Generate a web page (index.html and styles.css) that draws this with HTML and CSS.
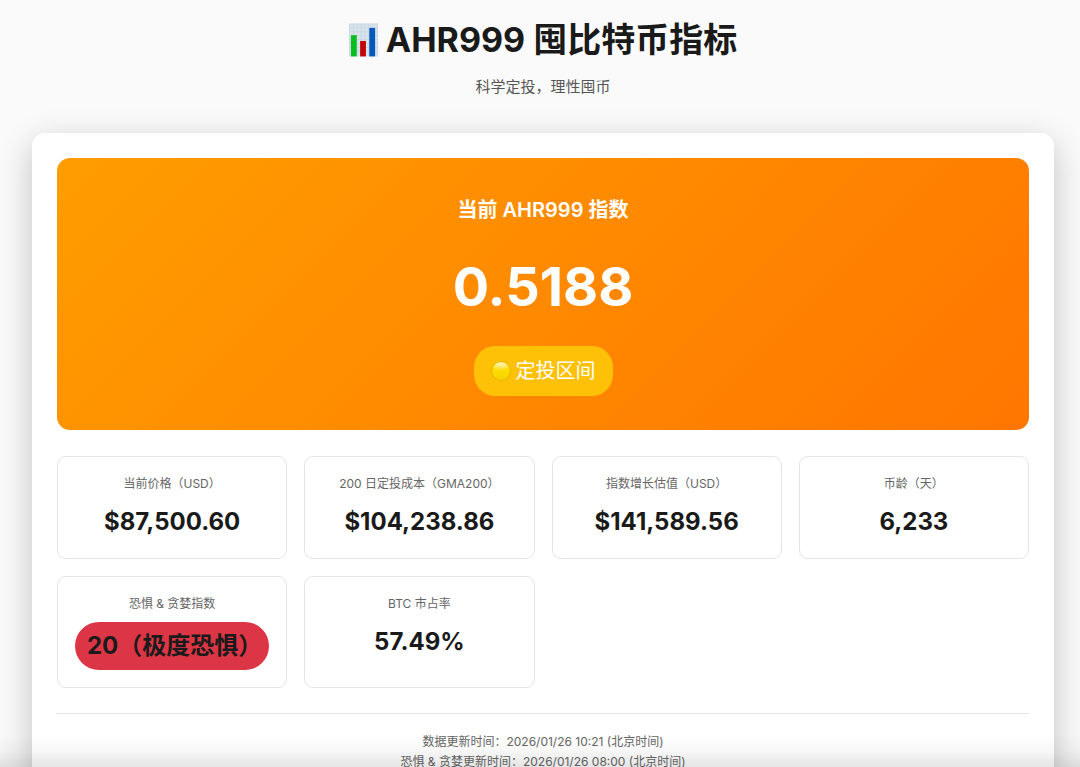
FILE: index.html
```html
<!DOCTYPE html>
<html lang="zh-CN">
<head>
  <meta charset="UTF-8">
  <meta name="viewport" content="width=device-width, initial-scale=1.0">
  <title>AHR999 囤比特币指标</title>
  <link rel="stylesheet" href="styles.css">
</head>
<body>
  <header class="header">
    <h1>
      <svg class="chart-icon" viewBox="0 0 30 34" aria-hidden="true">
        <rect width="30" height="34" fill="#d9e5ee"/>
        <path d="M0 .5H30M0 4.5H30M0 8.5H30M0 12.5H30M0 16.5H30M0 20.5H30M0 24.5H30M0 28.5H30M.5 0V34M4.5 0V34M8.5 0V34M12.5 0V34M16.5 0V34M20.5 0V34M24.5 0V34M29.5 0V34" stroke="#bccbd6" stroke-width="1" opacity=".5"/>
        <rect x="2" y="12" width="6" height="22" fill="#08bd20"/>
        <rect x="11.500" y="18" width="6" height="16" fill="#c00508"/>
        <rect x="21" y="4.500" width="6" height="29.500" fill="#0758bd"/>
      </svg>
      <span>AHR999 囤比特币指标</span>
    </h1>
    <p class="subtitle">科学定投，理性囤币</p>
  </header>

  <main class="card">
    <section class="index-box">
      <h2>当前 AHR999 指数</h2>
      <div class="index-value">0.5188</div>
      <div class="status">
        <svg class="dot-icon" viewBox="0 0 20 20" aria-hidden="true">
          <defs>
            <linearGradient id="dot" x1="0" y1="0" x2="0" y2="1">
              <stop offset="0" stop-color="#ffe45a"/>
              <stop offset=".45" stop-color="#ffdc00"/>
              <stop offset="1" stop-color="#f4d000"/>
            </linearGradient>
            <linearGradient id="shine" x1="0" y1="0" x2="0" y2="1">
              <stop offset="0" stop-color="#fff" stop-opacity=".65"/>
              <stop offset="1" stop-color="#fff" stop-opacity="0"/>
            </linearGradient>
          </defs>
          <circle cx="10" cy="10" r="9.500" fill="url(#dot)" stroke="#e5b500"/>
          <ellipse cx="10" cy="5.500" rx="6.500" ry="4" fill="url(#shine)"/>
        </svg>
        <span>定投区间</span>
      </div>
    </section>

    <section class="metrics">
      <div class="metric">
        <div class="metric-label">当前价格（USD）</div>
        <div class="metric-value">$87,500.60</div>
      </div>
      <div class="metric">
        <div class="metric-label">200 日定投成本（GMA200）</div>
        <div class="metric-value">$104,238.86</div>
      </div>
      <div class="metric">
        <div class="metric-label">指数增长估值（USD）</div>
        <div class="metric-value">$141,589.56</div>
      </div>
      <div class="metric">
        <div class="metric-label">币龄（天）</div>
        <div class="metric-value">6,233</div>
      </div>
      <div class="metric">
        <div class="metric-label">恐惧 &amp; 贪婪指数</div>
        <div class="metric-value fear">20（极度恐惧）</div>
      </div>
      <div class="metric">
        <div class="metric-label">BTC 市占率</div>
        <div class="metric-value">57.49%</div>
      </div>
    </section>

    <footer class="update-time">
      <div>数据更新时间：2026/01/26 10:21 (北京时间)</div>
      <div>恐惧 &amp; 贪婪更新时间：2026/01/26 08:00 (北京时间)</div>
    </footer>
  </main>
</body>
</html>
```
FILE: styles.css
```css
* {
  box-sizing: border-box;
  margin: 0;
  padding: 0;
}

body {
  font-family: Inter, "Noto Sans CJK SC", sans-serif;
  background-color: #fafafa;
  color: #1a1a1a;
  padding: 14px 26px 0 32px;
}

/* soft fade along the bottom edge of the window */
body::after {
  content: "";
  position: fixed;
  left: 0;
  right: 0;
  bottom: 0;
  height: 32px;
  background: linear-gradient(to bottom, rgba(0, 0, 0, 0), rgba(0, 0, 0, 0.03) 50%, rgba(0, 0, 0, 0.1));
  pointer-events: none;
}

.header {
  text-align: center;
  margin-bottom: 34px;
}

h1 {
  display: flex;
  align-items: center;
  justify-content: center;
  gap: 8px;
  font-size: 34px;
  line-height: 52px;
  font-weight: 700;
}

.chart-icon {
  width: 29px;
  height: 34px;
}

.subtitle {
  font-size: 15px;
  line-height: 24px;
  margin-top: 9px;
  color: #555;
}

.card {
  background: #fff;
  border-radius: 13px;
  padding: 25px;
  box-shadow: 0 10px 34px rgba(0, 0, 0, 0.23);
}

.index-box {
  display: flex;
  flex-direction: column;
  align-items: center;
  padding: 34px;
  border-radius: 13px;
  background: linear-gradient(135deg, #ff9d00, #ff7600);
  color: #fff;
}

h2 {
  font-size: 20px;
  line-height: 36px;
  font-weight: 600;
}

.index-value {
  font-size: 54px;
  line-height: 86px;
  font-weight: 700;
  margin: 16px 0;
}

.status {
  display: flex;
  align-items: center;
  gap: 5px;
  padding: 8px 17px;
  border-radius: 21px;
  background: #ffc107;
  font-size: 20px;
  line-height: 34px;
}

.dot-icon {
  width: 20px;
  height: 20px;
}

.metrics {
  display: grid;
  grid-template-columns: repeat(4, minmax(0, 1fr));
  gap: 17px;
  margin: 26px 0 25px;
}

.metric {
  border: 1px solid #e5e5e5;
  border-radius: 9px;
  padding: 17px;
  text-align: center;
}

.metric-label {
  font-size: 12px;
  line-height: 20px;
  color: #666;
  margin-bottom: 8px;
}

.metric-value {
  font-size: 24px;
  line-height: 39px;
  font-weight: 700;
}

.fear {
  padding: 4px 12px;
  line-height: 40px;
  border-radius: 24px;
  background: #dc3545;
  white-space: nowrap;
}

.update-time {
  border-top: 1px solid #e5e5e5;
  padding-top: 18px;
  text-align: center;
  font-size: 12px;
  line-height: 20px;
  color: #666;
}
```
